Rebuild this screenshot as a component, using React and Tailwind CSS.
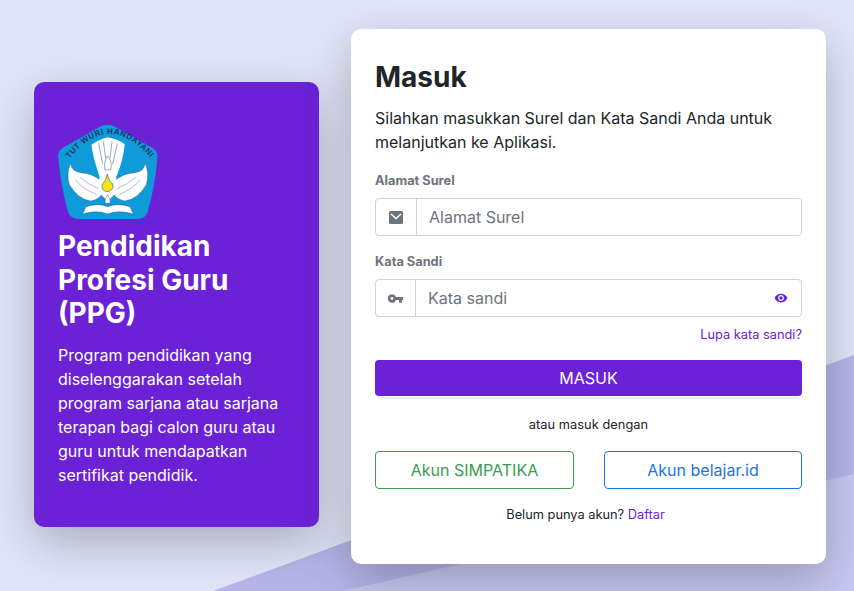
// Halaman masuk PPG
import { MdVpnKey, MdVisibility } from "react-icons/md";

// ── Logo Tut Wuri Handayani ──────────────────────────────────────────────────
function Logo() {
  const wing = "M62 130 Q64 154 92 158 Q128 160 152 182 L160 214 Q152 238 122 243 Q84 238 58 194 Q48 158 62 130Z";
  return (
    <svg viewBox="24 6 300 300" className="w-[100px] h-[100px] block">
      <path d="M150 20 Q172 9 195 20 L308 84 Q325 95 322 115 Q315 200 294 272 Q288 297 262 297 L86 297 Q60 297 53 272 Q33 200 25 115 Q22 95 38 84 Z" fill="#0f9ad9" />
      <path id="arc" d="M58 116 Q175 -32 304 116" fill="none" />
      <text fontFamily="'Liberation Sans', sans-serif" fontWeight="700" fontSize="24" fill="#1b2f66">
        <textPath href="#arc" textLength="292" startOffset="0">TUT WURI HANDAYANI</textPath>
      </text>
      {/* ekor */}
      <path d="M124 74 Q150 58 172 52 Q199 56 224 72 Q221 118 199 170 L149 170 Q130 118 124 74Z" fill="#fff" />
      <g stroke="#1b2f66" strokeWidth="1.3" fill="none">
        <path d="M146 70 L158 132" />
        <path d="M160 64 L167 115" />
        <path d="M186 64 L180 115" />
        <path d="M202 70 L188 132" />
        <path d="M173 108 Q160 125 165 150 L182 150 Q188 125 173 108Z" fill="#fff" />
      </g>
      {/* sayap */}
      <path d={wing} fill="#fff" stroke="#1b2f66" strokeWidth="1" />
      <path d={wing} fill="#fff" stroke="#1b2f66" strokeWidth="1" transform="translate(347 0) scale(-1 1)" />
      <path d="M76 180 Q100 208 140 224 M90 172 Q112 192 146 206" stroke="#1b2f66" strokeWidth="1" fill="none" />
      <path d="M271 180 Q247 208 207 224 M257 172 Q235 192 201 206" stroke="#1b2f66" strokeWidth="1" fill="none" />
      <path d="M148 172 L173 150 L199 172 L199 218 L173 244 L148 218Z" fill="#fff" />
      {/* nyala */}
      <path d="M172 162 Q168 182 156 195 Q154 213 172 215 Q191 213 189 193 Q176 184 172 162Z" fill="#f6e51b" stroke="#1b2f66" strokeWidth="1.5" />
      <path d="M173 224 Q163 238 165 250 L181 250 Q183 238 173 224Z" fill="#fff" stroke="#1b2f66" strokeWidth="1.2" />
      {/* buku */}
      <path d="M108 260 Q145 248 173 260 Q201 248 240 260 L250 282 Q205 268 173 282 Q141 268 98 282Z" fill="#fff" stroke="#1b2f66" strokeWidth="1" />
    </svg>
  );
}

function MailIcon() {
  return (
    <svg viewBox="0 0 14 13" className="w-[14px] h-[13px]">
      <rect width="14" height="13" rx="1.5" fill="currentColor" />
      <path d="M2 3 L7 7.5 L12 3" fill="none" stroke="#fff" strokeWidth="1.6" />
    </svg>
  );
}

function InputGroup({ icon, addonWidth, placeholder, type, trailing }) {
  return (
    <div className="flex h-[38px] border border-[#ced4da] rounded-[4px] bg-white">
      <span className={`flex items-center justify-center border-r border-[#ced4da] text-[#6c757d] text-[17px] ${addonWidth}`}>
        {icon}
      </span>
      <input
        type={type}
        placeholder={placeholder}
        className="flex-1 min-w-0 px-3 text-[16px] outline-none placeholder:text-[#6c757d]"
      />
      {trailing}
    </div>
  );
}

export default function App() {
  return (
    <div className="relative h-[591px] w-[854px] overflow-hidden bg-[#e2e5f9] font-['Inter',sans-serif] text-[#212529]">
      {/* Bidang latar */}
      <svg viewBox="0 0 854 591" className="absolute inset-0 w-full h-full">
        <polygon points="213,591 854,355 854,591" fill="#b6b6e9" />
        <polygon points="343,591 854,474 854,591" fill="#c8c9f3" />
      </svg>

      <div className="relative flex items-start pl-[34px] gap-[32px]">
        {/* ── Panel kiri ─────────────────────────────────────────── */}
        <div className="mt-[82px] w-[285px] h-[445px] rounded-[10px] bg-[#6b22d6] px-6 pt-[40px] text-white shadow-[0_16px_48px_rgba(0,0,0,0.25)]">
          <Logo />
          <h1 className="mt-[8px] text-[28px] leading-[33.6px] font-bold">
            Pendidikan Profesi Guru (PPG)
          </h1>
          <p className="mt-[12px] text-[16px] leading-[24px]">
            Program pendidikan yang diselenggarakan setelah program sarjana atau sarjana terapan bagi calon guru atau guru untuk mendapatkan sertifikat pendidik.
          </p>
        </div>

        {/* ── Form masuk ─────────────────────────────────────────── */}
        <div className="mt-[29px] w-[475px] h-[535px] rounded-[10px] bg-white px-6 pt-[30px] shadow-[0_16px_48px_rgba(0,0,0,0.25)]">
          <h2 className="text-[28px] leading-[36px] font-bold">Masuk</h2>
          <p className="mt-[11px] text-[16px] leading-[24px]">
            Silahkan masukkan Surel dan Kata Sandi Anda untuk melanjutkan ke Aplikasi.
          </p>

          <label className="block mt-[17px] mb-[7px] text-[12.8px] leading-[20px] font-bold text-[#6c757d]">Alamat Surel</label>
          <InputGroup icon={<MailIcon />} addonWidth="w-[41px]" placeholder="Alamat Surel" type="text" />

          <label className="block mt-[16px] mb-[7px] text-[12.8px] leading-[20px] font-bold text-[#6c757d]">Kata Sandi</label>
          <InputGroup
            icon={<MdVpnKey />}
            addonWidth="w-[40px]"
            placeholder="Kata sandi"
            type="password"
            trailing={
              <span className="flex items-center pr-[13px] text-[#6b22d6] text-[14px]">
                <MdVisibility />
              </span>
            }
          />

          <div className="mt-[8px] text-right text-[12.8px] leading-[20px] text-[#6b22d6]">Lupa kata sandi?</div>

          <button className="mt-[15px] w-full h-[36px] rounded-[4px] bg-[#6b22d6] text-white text-[16px]">MASUK</button>
          <div className="mx-[2px] h-[2px] mt-[1px] bg-[#eceef1]" />

          <p className="mt-[16px] text-center text-[12.8px] tracking-[0.05px] leading-[20px]">atau masuk dengan</p>

          <div className="mt-[16px] flex gap-[30px]">
            <button className="w-[199px] h-[38px] rounded-[4px] border border-[#3b9c4f] text-[#3b9c4f] text-[16px]">Akun SIMPATIKA</button>
            <button className="w-[198px] h-[38px] rounded-[4px] border border-[#1a76dc] text-[#1a76dc] text-[16px]">Akun belajar.id</button>
          </div>

          <p className="mt-[16px] pr-[6px] text-center text-[12.8px] leading-[20px]">
            Belum punya akun? <span className="text-[#6b22d6]">Daftar</span>
          </p>
        </div>
      </div>
    </div>
  );
}
